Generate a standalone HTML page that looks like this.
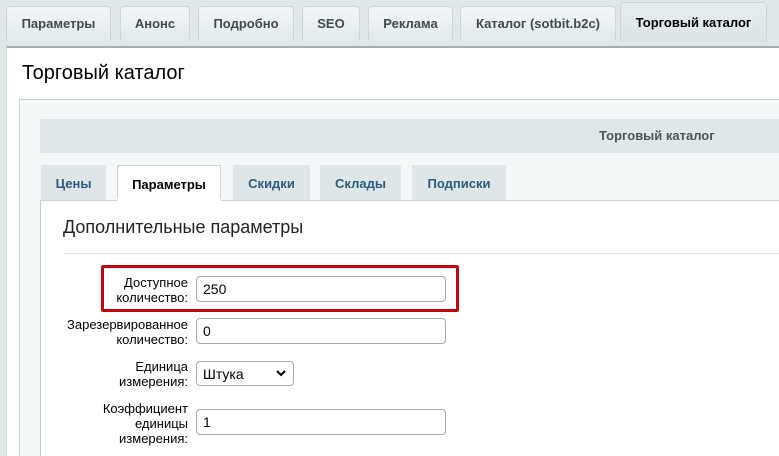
<!DOCTYPE html>
<html><head><meta charset="utf-8"><style>
*{box-sizing:border-box;margin:0;padding:0}
body{width:779px;height:456px;overflow:hidden;background:#e1e8ea;font-family:"Liberation Sans",Arial,sans-serif;position:relative}
.a{position:absolute}
.tab{position:absolute;top:6px;height:35px;background:linear-gradient(#f2f5f6,#e3eaeb);border:1px solid #cdd5d8;border-bottom:none;border-radius:4px 4px 0 0;font-size:13px;font-weight:bold;color:#3f4b4e;text-align:center;line-height:33px}
.tab.act{top:2px;height:40px;background:linear-gradient(#e8eeef,#dbe3e5);color:#000;line-height:40px}
.st{position:absolute;top:165px;height:35px;background:#dfe6e8;font-size:13px;font-weight:bold;color:#2c5b7f;text-align:center;line-height:37px}
.st.act{background:#fff;color:#000;border:1px solid #ccd3d6;border-bottom:none}
.lbl{position:absolute;right:591px;font-size:13px;color:#000;text-align:right;line-height:15px}
.inp{position:absolute;left:196px;width:250px;height:26px;border:1px solid #a9a9a9;border-radius:4px;background:#fff;font-size:14px;padding-left:6px;line-height:24px}
</style></head><body>
<div class="tab" style="left:6px;width:105px">Параметры</div>
<div class="tab" style="left:120px;width:70px">Анонс</div>
<div class="tab" style="left:198px;width:96px">Подробно</div>
<div class="tab" style="left:302px;width:58px">SEO</div>
<div class="tab" style="left:368px;width:85px">Реклама</div>
<div class="tab" style="left:460px;width:156px">Каталог (sotbit.b2c)</div>
<div class="tab act" style="left:620px;width:147px">Торговый каталог</div>
<div class="a" style="left:6px;top:46px;width:773px;height:410px;background:#fff;border-top:2px solid #a5adb0;border-left:1px solid #d5dcde"></div>
<div class="a" style="left:22px;top:62px;font-size:20px;color:#000">Торговый каталог</div>
<div class="a" style="left:19px;top:99px;width:760px;height:357px;background:#f5f8f9;border-top:1px solid #c8d0d3;border-left:1px solid #c8d0d3"></div>
<div class="a" style="left:40px;top:119px;width:739px;height:34px;background:#e0e7e9"></div>
<div class="a" style="left:599px;top:128px;font-size:13px;font-weight:bold;color:#4a5659">Торговый каталог</div>
<div class="st" style="left:41px;width:65px">Цены</div>
<div class="st act" style="left:117px;width:104px">Параметры</div>
<div class="st" style="left:233px;width:77px">Скидки</div>
<div class="st" style="left:320px;width:81px">Склады</div>
<div class="st" style="left:412px;width:94px">Подписки</div>
<div class="a" style="left:40px;top:200px;width:739px;height:256px;background:#fff;border-top:1px solid #ccd3d6;border-left:1px solid #c6cdd0"></div>
<div class="a" style="left:117px;top:199px;width:104px;height:3px;background:#fff"></div>
<div class="a" style="left:63px;top:217px;font-size:18px;color:#222">Дополнительные параметры</div>
<div class="a" style="left:63px;top:253px;width:716px;height:1px;background:#dde2e4"></div>
<div class="a" style="left:101px;top:265px;width:358px;height:47px;border:3px solid #c1080f;border-radius:2px"></div>
<div class="lbl" style="top:275px">Доступное<br>количество:</div>
<div class="inp" style="top:276px">250</div>
<div class="lbl" style="top:317px">Зарезервированное<br>количество:</div>
<div class="inp" style="top:318px">0</div>
<div class="lbl" style="top:359px">Единица<br>измерения:</div>
<div class="inp" style="top:361px;width:98px;height:25px">Штука<svg class="a" style="right:7px;top:8px" width="10" height="7" viewBox="0 0 10 7"><path d="M1 1l4 4 4-4" stroke="#000" stroke-width="2" fill="none"/></svg></div>
<div class="lbl" style="top:401px">Коэффициент<br>единицы<br>измерения:</div>
<div class="inp" style="top:409px">1</div>
</body></html>
